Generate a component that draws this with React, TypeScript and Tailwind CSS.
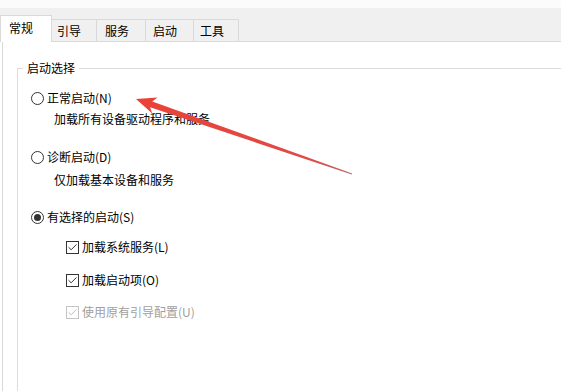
import { Check } from 'lucide-react'

const tabs = [
  { label: '常规', w: 'w-[52px]', pl: 'pl-[8px]' },
  { label: '引导', w: 'w-[45px]', pl: 'pl-[5px]' },
  { label: '服务', w: 'w-[49px]', pl: 'pl-[8px]' },
  { label: '启动', w: 'w-[48px]', pl: 'pl-[7px]' },
  { label: '工具', w: 'w-[45px]', pl: 'pl-[6px]' },
]

function Radio({ checked, label, className }: { checked?: boolean; label: string; className: string }) {
  return (
    <div className={`flex items-center h-4 pl-[13px] ${className}`}>
      <span className="flex items-center justify-center w-[13px] h-[13px] rounded-full border border-[#333] bg-white">
        {checked && <span className="w-[7px] h-[7px] rounded-full bg-[#333]" />}
      </span>
      <span className="ml-[3px]">{label}</span>
    </div>
  )
}

function CheckBox({ label, disabled, className }: { label: string; disabled?: boolean; className: string }) {
  return (
    <div className={`flex items-center h-4 pl-[48px] ${className} ${disabled ? 'text-[#a0a0a0]' : ''}`}>
      <span
        className={`flex items-center justify-center w-[13px] h-[13px] border bg-white ${
          disabled ? 'border-[#c4c4c4]' : 'border-[#333]'
        }`}
      >
        <Check className={`w-[11px] h-[11px] ${disabled ? 'text-[#b8b8b8]' : 'text-[#222]'}`} strokeWidth={2} />
      </span>
      <span className="ml-[3px]">{label}</span>
    </div>
  )
}

export default function App() {
  return (
    <div
      className="relative w-[561px] h-[391px] overflow-hidden bg-white text-[12px] leading-4 text-[#000] flex flex-col"
      style={{ fontFamily: '"Noto Sans CJK SC", "Noto Sans", sans-serif' }}
    >
      <div className="shrink-0 h-[8px] bg-[#fbfbfb]" />
      <div className="shrink-0 h-[34px] bg-[#f0f0f0] border-b border-[#d9d9d9] flex items-end">
        {tabs.map((t, i) =>
          i === 0 ? (
            <div
              key={t.label}
              className={`${t.w} ${t.pl} h-[27px] -mb-px bg-white border border-b-0 border-[#d9d9d9] flex items-center pb-[2px]`}
            >
              {t.label}
            </div>
          ) : (
            <div
              key={t.label}
              className={`${t.w} ${t.pl} h-[22px] border-t border-r border-[#d9d9d9] bg-[#f0f0f0] flex items-center`}
            >
              {t.label}
            </div>
          )
        )}
      </div>

      <div className="flex-1 min-h-0 overflow-hidden border-l border-[#d9d9d9] ml-[2px] pl-[14px]">
        <fieldset className="mt-[18px] border-t border-l border-[#dcdcdc] h-[400px]">
          <legend className="ml-[5px] px-1 h-4 leading-4">启动选择</legend>
          <Radio label="正常启动(N)" className="mt-[14px]" />
          <div className="h-4 pl-[36px] mt-[5px]">加载所有设备驱动程序和服务</div>
          <Radio label="诊断启动(D)" className="mt-[22px]" />
          <div className="h-4 pl-[36px] mt-[7px]">仅加载基本设备和服务</div>
          <Radio checked label="有选择的启动(S)" className="mt-[21px]" />
          <CheckBox label="加载系统服务(L)" className="mt-[14px]" />
          <CheckBox label="加载启动项(O)" className="mt-[17px]" />
          <CheckBox disabled label="使用原有引导配置(U)" className="mt-[16px]" />
        </fieldset>
      </div>

      {/* red annotation arrow drawn over the dialog */}
      <svg className="absolute left-0 top-0 pointer-events-none" width="561" height="391" viewBox="0 0 561 391">
        <defs>
          <linearGradient id="arrowFade" x1="136" y1="99" x2="352" y2="174" gradientUnits="userSpaceOnUse">
            <stop offset="0" stopColor="#ea4238" />
            <stop offset="0.8" stopColor="#e04a44" />
            <stop offset="1" stopColor="#b86a6a" />
          </linearGradient>
        </defs>
        <polygon
          points="136,99 157.5,97.5 152.3,101.4 352.2,173.4 351.8,174.6 150.1,107.2 152.3,113.4"
          fill="url(#arrowFade)"
        />
      </svg>
    </div>
  )
}
